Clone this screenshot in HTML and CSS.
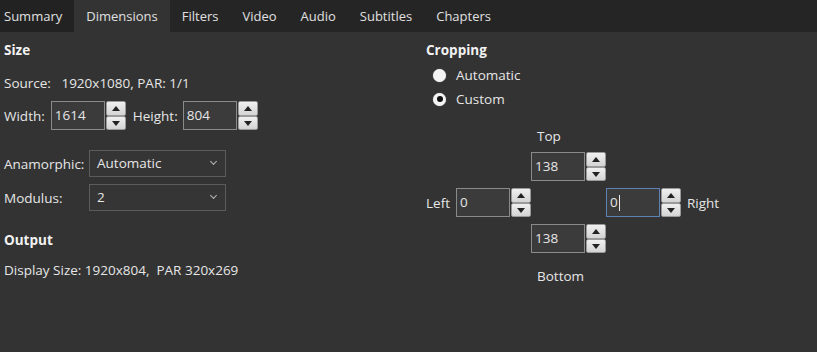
FILE: index.html
```html
<!DOCTYPE html>
<html>
<head>
    <title>Dimensions</title>
    <link rel="stylesheet" href="styles.css">
</head>
<body>
    <div class="tabs">
        <div class="tab first">Summary</div>
        <div class="tab active">Dimensions</div>
        <div class="tab">Filters</div>
        <div class="tab">Video</div>
        <div class="tab">Audio</div>
        <div class="tab">Subtitles</div>
        <div class="tab">Chapters</div>
    </div>

    <div class="page">
        <div class="col left-col">
            <div class="heading">Size</div>
            <div class="line source">Source:&nbsp;&nbsp; 1920x1080, PAR: 1/1</div>
            <div class="row size-row">
                <span class="lbl">Width:</span>
                <div class="spin">
                    <div class="spin-input">1614</div>
                    <div class="spin-btns"><div class="btn up"></div><div class="btn down"></div></div>
                </div>
                <span class="lbl height-lbl">Height:</span>
                <div class="spin">
                    <div class="spin-input">804</div>
                    <div class="spin-btns"><div class="btn up"></div><div class="btn down"></div></div>
                </div>
            </div>
            <div class="row combo-row first-combo">
                <span class="combo-lbl">Anamorphic:</span>
                <div class="combo">Automatic<span class="chev"></span></div>
            </div>
            <div class="row combo-row">
                <span class="combo-lbl">Modulus:</span>
                <div class="combo">2<span class="chev"></span></div>
            </div>
            <div class="heading output">Output</div>
            <div class="line display">Display Size: 1920x804,&nbsp; PAR 320x269</div>
        </div>

        <div class="col right-col">
            <div class="heading">Cropping</div>
            <div class="radio"><span class="dot"></span>Automatic</div>
            <div class="radio"><span class="dot checked"></span>Custom</div>

            <div class="crop">
                <div class="crop-top-lbl">Top</div>
                <div class="crop-top">
                    <div class="spin">
                        <div class="spin-input">138</div>
                        <div class="spin-btns"><div class="btn up"></div><div class="btn down"></div></div>
                    </div>
                </div>
                <div class="crop-left">
                    <span class="side-lbl">Left</span>
                    <div class="spin">
                        <div class="spin-input">0</div>
                        <div class="spin-btns"><div class="btn up"></div><div class="btn down"></div></div>
                    </div>
                </div>
                <div class="crop-right">
                    <div class="spin">
                        <div class="spin-input focus">0<span class="caret"></span></div>
                        <div class="spin-btns"><div class="btn up"></div><div class="btn down"></div></div>
                    </div>
                    <span class="side-lbl">Right</span>
                </div>
                <div class="crop-bottom">
                    <div class="spin">
                        <div class="spin-input">138</div>
                        <div class="spin-btns"><div class="btn up"></div><div class="btn down"></div></div>
                    </div>
                </div>
                <div class="crop-bottom-lbl">Bottom</div>
            </div>
        </div>
    </div>
</body>
</html>
```

FILE: styles.css
```css
body {
    margin: 0;
    padding: 0;
    background-color: #333333;
    color: #e6e6e6;
    font-family: "Open Sans", "Noto Sans", sans-serif;
    font-size: 13.5px;
    height: 352px;
    overflow: hidden;
}
.tabs {
    display: flex;
    height: 32px;
    background-color: #252525;
}
.tab {
    padding: 0 12px;
    line-height: 32px;
    font-size: 13px;
    color: #e0e0e0;
}
.tab.first {
    padding-left: 4px;
    background-color: #222222;
}
.tab.active {
    background-color: #333333;
}
.page {
    display: flex;
}
.col {
    display: flex;
    flex-direction: column;
}
.left-col {
    width: 422px;
    padding-left: 4px;
}
.heading {
    font-weight: bold;
    font-size: 13.5px;
    line-height: 18px;
    margin-top: 9px;
    color: #f2f2f2;
}
.line {
    line-height: 18px;
}
.source {
    margin-top: 15px;
}
.row {
    display: flex;
    align-items: center;
}
.size-row {
    margin-top: 9px;
}
.lbl {
    margin-right: 6px;
}
.height-lbl {
    margin-left: 7px;
    margin-right: 5px;
}
.spin {
    display: flex;
    height: 29px;
}
.spin-input {
    width: 49px;
    height: 27px;
    border: 1px solid #8a8a8a;
    background-color: #3b3b3b;
    line-height: 27px;
    padding-left: 3px;
    box-sizing: content-box;
    position: relative;
}
.spin-input.focus {
    border-color: #5d82b5;
}
.caret {
    position: absolute;
    left: 12px;
    top: 6px;
    width: 1px;
    height: 16px;
    background-color: #e6e6e6;
}
.spin-btns {
    display: flex;
    flex-direction: column;
    margin-left: 1px;
    width: 20px;
}
.btn {
    flex: 1;
    background: linear-gradient(#f0f0f0, #d4d4d4);
    border: 1px solid #9a9a9a;
    border-radius: 2px;
    position: relative;
}
.btn::after {
    content: "";
    position: absolute;
    left: 5px;
    top: 4px;
    border-left: 4px solid transparent;
    border-right: 4px solid transparent;
}
.btn.up::after {
    border-bottom: 5px solid #222;
}
.btn.down::after {
    border-top: 5px solid #222;
}
.combo-row {
    margin-top: 7px;
}
.combo-row.first-combo {
    margin-top: 20px;
}
.combo-lbl {
    width: 85px;
}
.combo {
    width: 128px;
    height: 25px;
    line-height: 24px;
    padding-left: 7px;
    border: 1px solid #5c5c5c;
    background-color: #353535;
    position: relative;
}
.chev {
    position: absolute;
    right: 9px;
    top: 8px;
    width: 4px;
    height: 4px;
    border-right: 1.5px solid #b8b8b8;
    border-bottom: 1.5px solid #b8b8b8;
    transform: rotate(45deg);
}
.heading.output {
    margin-top: 20px;
}
.display {
    margin-top: 12px;
}
.right-col {
    width: 300px;
}
.radio {
    display: flex;
    align-items: center;
    line-height: 18px;
    margin-top: 7px;
    padding-left: 7px;
}
.radio + .radio {
    margin-top: 6px;
}
.dot {
    width: 13px;
    height: 13px;
    border-radius: 50%;
    background-color: #f4f4f4;
    margin-right: 10px;
    position: relative;
    box-shadow: 0 0 1px #aaa;
}
.dot.checked::after {
    content: "";
    position: absolute;
    left: 3.5px;
    top: 3.5px;
    width: 6px;
    height: 6px;
    border-radius: 50%;
    background-color: #111;
}
.crop {
    display: grid;
    grid-template-columns: 105px 75px 120px;
    margin-top: 19px;
}
.crop-top-lbl,
.crop-bottom-lbl {
    grid-column: 2;
    padding-left: 6px;
    line-height: 18px;
}
.crop-top {
    grid-column: 2;
    margin-top: 7px;
}
.crop-left {
    grid-column: 1;
    display: flex;
    align-items: center;
    justify-content: flex-end;
    margin-top: 7px;
}
.crop-right {
    grid-column: 3;
    display: flex;
    align-items: center;
    margin-top: 7px;
}
.side-lbl {
    padding: 0 6px;
}
.crop-bottom {
    grid-column: 2;
    margin-top: 7px;
}
.crop-bottom-lbl {
    margin-top: 14px;
}
```
